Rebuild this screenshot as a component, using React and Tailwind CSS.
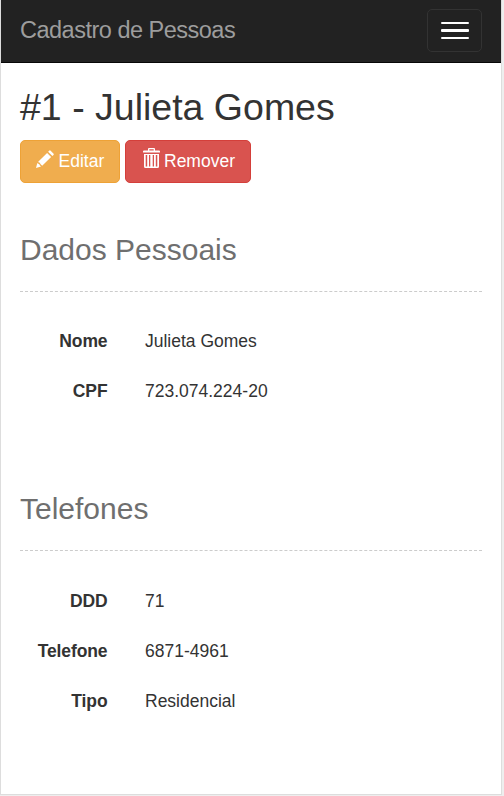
function PencilIcon() {
  return (
    <svg className="mt-[1px] h-[18px] w-[18px] shrink-0" viewBox="0 0 18 18" fill="currentColor">
      <path d="M14.4 0.6 L17.6 3.8 Q18.1 4.4 17.5 5 L16.4 6 L12.1 1.7 L13.2 0.7 Q13.8 0.1 14.4 0.6 Z" />
      <path d="M11.1 2.9 L15.1 6.9 L6.2 15.8 L4.9 14.6 L4.2 13.8 L4 12.8 L2.8 12.5 L2.2 11.8 Z" />
      <path d="M1.3 12.9 L2.2 13.7 L3.2 14.1 L3.6 15.1 L5 16.6 L0 18 Z" />
    </svg>
  );
}

function TrashIcon() {
  return (
    <svg className="h-[20px] w-[17px] shrink-0" viewBox="0 0 17 20" fill="currentColor">
      <path d="M5 2.5 V1 Q5 0 6 0 H11 Q12 0 12 1 V2.5 H16 Q17 2.6 17 3.5 V4.5 H0 V3.5 Q0 2.6 1 2.5 Z M6.3 2.5 H10.7 V1.3 H6.3 Z" fillRule="evenodd" />
      <path d="M1 6 H16 V18.5 Q16 20 14.5 20 H2.5 Q1 20 1 18.5 Z M2.7 7 V18.4 H4.2 V7 Z M6 7 V18.4 H7.3 V7 Z M9.7 7 V18.4 H11 V7 Z M12.8 7 V18.4 H14.3 V7 Z" fillRule="evenodd" />
    </svg>
  );
}

function Field({ label, value }) {
  return (
    <div className="flex h-[50px] items-center text-[17.5px] leading-[25px]">
      <dt className="w-[87.5px] text-right font-bold tracking-[-0.1px]">{label}</dt>
      <dd className="ml-[37.5px]">{value}</dd>
    </div>
  );
}

function Section({ title, fields, className, listClassName }) {
  return (
    <section className={className}>
      <h2 className="h-[62px] border-b border-dashed border-[#ccc] pt-[1px] text-[30px] leading-[38px] text-[#6f6f6f]">{title}</h2>
      <dl className={listClassName}>
        {fields.map(([label, value]) => (
          <Field key={label} label={label} value={value} />
        ))}
      </dl>
    </section>
  );
}

export default function App() {
  return (
    <div className="h-[796px] w-[504px] bg-[#eee] font-['Liberation_Sans',Arial,sans-serif] text-[#333]">
      <div className="h-[795px] w-[502px] border-x border-b border-[#ddd] bg-white">
        <nav className="flex h-[63px] items-center justify-between border-b border-[#080808] bg-[#222] px-[19px]">
          <a className="pb-[2px] text-[23.5px] leading-[25px] tracking-[-0.5px] text-[#9d9d9d]">Cadastro de Pessoas</a>
          <button aria-label="Menu" className="mb-[1px] flex h-[43px] w-[55px] flex-col items-center justify-center gap-[5px] rounded-[5px] border border-[#333]">
            <span className="h-[2px] w-[28px] rounded-[1px] bg-white" />
            <span className="h-[3px] w-[28px] rounded-[1px] bg-white" />
            <span className="h-[2px] w-[28px] rounded-[1px] bg-white" />
          </button>
        </nav>
        <main className="px-[19px] pt-[23px]">
          <h1 className="text-[37.5px] leading-[42px]">#1 - Julieta Gomes</h1>
          <div className="mt-[12px] flex gap-[5px] text-[17.5px] leading-[25px] text-white">
            <button className="flex h-[43px] w-[100px] items-start rounded-[5px] border border-[#eea236] bg-[#f0ad4e] pt-[8px] pl-[15px]">
              <PencilIcon />
              <span className="ml-[4.5px]">Editar</span>
            </button>
            <button className="flex h-[43px] w-[126px] items-start rounded-[5px] border border-[#d43f3a] bg-[#d9534f] pt-[7px] pl-[17px]">
              <TrashIcon />
              <span className="mt-[1px] ml-[4px]">Remover</span>
            </button>
          </div>
          <Section
            title="Dados Pessoais"
            className="mt-[47px]"
            listClassName="pt-[24px]"
            fields={[["Nome", "Julieta Gomes"], ["CPF", "723.074.224-20"]]}
          />
          <Section
            title="Telefones"
            className="mt-[73px]"
            listClassName="pt-[25px]"
            fields={[["DDD", "71"], ["Telefone", "6871-4961"], ["Tipo", "Residencial"]]}
          />
        </main>
      </div>
    </div>
  );
}
